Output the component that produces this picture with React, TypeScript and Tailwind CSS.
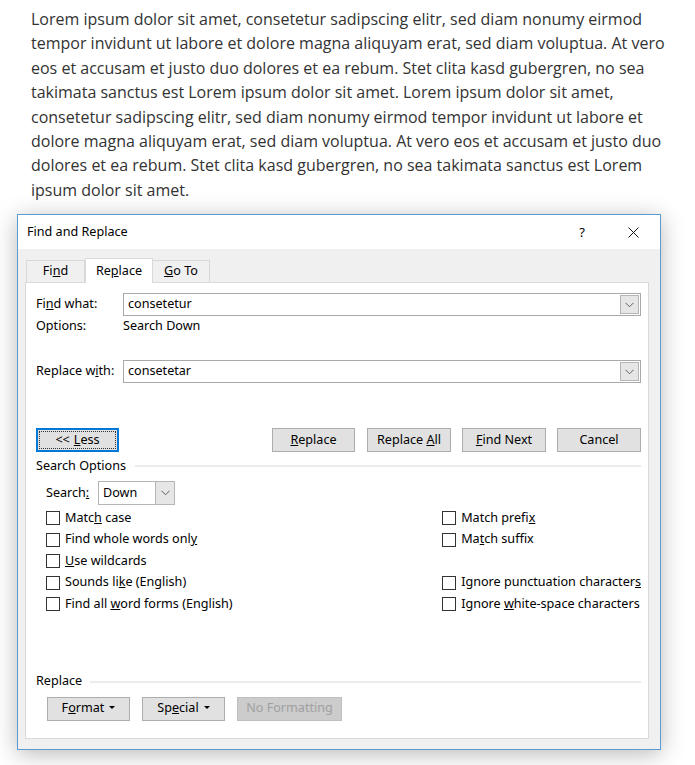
import React from 'react';

const dlgFont = { fontFamily: '"Noto Sans", "Open Sans", sans-serif' };

function Chevron() {
  return (
    <svg width="9" height="6" viewBox="0 0 9 6" className="text-[#606060]">
      <path d="M0.5 0.8 L4.5 4.8 L8.5 0.8" fill="none" stroke="currentColor" strokeWidth="1" />
    </svg>
  );
}

function Combo({ value }: { value: string }) {
  return (
    <div className="flex-1 h-[23px] border border-[#a9a9a9] bg-white flex items-center">
      <span className="flex-1 pl-[4px] text-black">{value}</span>
      <div className="w-[19px] h-[19px] mr-[1px] bg-[#e6e6e6] border border-[#b5b5b5] flex items-center justify-center">
        <Chevron />
      </div>
    </div>
  );
}

function Btn({ children, w = 'w-[84px]' }: { children: React.ReactNode; w?: string }) {
  return (
    <div className={`${w} h-[24px] bg-[#e1e1e1] border border-[#adadad] flex items-center justify-center text-black`}>
      {children}
    </div>
  );
}

function Check({ children }: { children: React.ReactNode }) {
  return (
    <div className="h-[21.5px] flex items-center gap-[5px] text-black whitespace-nowrap">
      <div className="w-[14px] h-[14px] border border-[#333] bg-white shrink-0" />
      <span>{children}</span>
    </div>
  );
}

function Caret() {
  return <span className="inline-block ml-[5px] mb-[2px] w-0 h-0 border-l-[3px] border-r-[3px] border-t-[3px] border-l-transparent border-r-transparent border-t-black align-middle" />;
}

export default function App() {
  return (
    <div className="w-[695px] h-[765px] bg-white overflow-hidden">
      <p
        className="pl-[31px] pr-[4px] pt-[7px] text-[16px] leading-[24.4px] text-[#333]"
        style={{ fontFamily: '"Open Sans", sans-serif' }}
      >
        Lorem ipsum dolor sit amet, consetetur sadipscing elitr, sed diam nonumy eirmod tempor invidunt ut labore et
        dolore magna aliquyam erat, sed diam voluptua. At vero eos et accusam et justo duo dolores et ea rebum. Stet
        clita kasd gubergren, no sea takimata sanctus est Lorem ipsum dolor sit amet. Lorem ipsum dolor sit amet,
        consetetur sadipscing elitr, sed diam nonumy eirmod tempor invidunt ut labore et dolore magna aliquyam erat, sed
        diam voluptua. At vero eos et accusam et justo duo dolores et ea rebum. Stet clita kasd gubergren, no sea
        takimata sanctus est Lorem ipsum dolor sit amet.
      </p>

      {/* Dialog */}
      <div
        className="ml-[17px] mt-[12px] w-[644px] border border-[#5b9bd5] bg-[#f0f0f0] shadow-[0_4px_22px_rgba(0,0,0,0.28)] text-[12.6px]"
        style={dlgFont}
      >
        {/* Title bar */}
        <div className="h-[34px] bg-white flex items-center pl-[9px] text-black">
          <span className="flex-1">Find and Replace</span>
          <span className="w-[20px] text-center mr-[36px] text-[13px]">?</span>
          <svg width="11" height="11" viewBox="0 0 11 11" className="mr-[21px]">
            <path d="M0.5 0.5 L10.5 10.5 M10.5 0.5 L0.5 10.5" stroke="#111" strokeWidth="1" />
          </svg>
        </div>

        <div className="pl-[7px] pr-[11px] pt-[8px] pb-[10px]">
          {/* Tabs */}
          <div className="flex items-end h-[25px] pl-[1px]">
            <div className="w-[59px] h-[22px] bg-[#f0f0f0] border border-b-0 border-[#d9d9d9] flex items-center justify-center text-black">
              Fi<u>n</u>d
            </div>
            <div className="w-[68px] h-[25px] bg-white border border-b-0 border-[#d9d9d9] flex items-center justify-center text-black relative top-[1px] z-10">
              Re<u>p</u>lace
            </div>
            <div className="w-[57px] h-[22px] bg-[#f0f0f0] border border-b-0 border-l-0 border-[#d9d9d9] flex items-center justify-center text-black">
              <u>G</u>o To
            </div>
          </div>

          {/* Panel */}
          <div className="h-[457px] bg-white border border-[#d9d9d9] flex flex-col pl-[10px] pr-[7px] pt-[10px] text-black">
            <div className="flex items-center h-[23px]">
              <span className="w-[87px]">Fi<u>n</u>d what:</span>
              <Combo value="consetetur" />
            </div>
            <div className="flex items-center h-[16px] mt-[2px]">
              <span className="w-[87px]">Options:</span>
              <span>Search Down</span>
            </div>
            <div className="flex items-center h-[23px] mt-[26px]">
              <span className="w-[87px]">Replace w<u>i</u>th:</span>
              <Combo value="consetetar" />
            </div>

            <div className="flex items-center h-[24px] mt-[45px]">
              <div className="w-[83px] h-[24px] bg-[#e1e1e1] border-2 border-[#0078d7] p-[1px]">
                <div className="w-full h-full border border-dotted border-[#333] flex items-center justify-center">
                  &lt;&lt; <u className="ml-[4px]">L</u>ess
                </div>
              </div>
              <div className="flex-1" />
              <Btn w="w-[83px]">
                <span><u>R</u>eplace</span>
              </Btn>
              <div className="w-[12px]" />
              <Btn>
                <span>Replace <u>A</u>ll</span>
              </Btn>
              <div className="w-[11px]" />
              <Btn>
                <span><u>F</u>ind Next</span>
              </Btn>
              <div className="w-[11px]" />
              <Btn>Cancel</Btn>
            </div>

            <div className="flex items-center h-[16px] mt-[6px]">
              <span>Search Options</span>
              <div className="flex-1 h-[2px] bg-[#ececec] ml-[9px]" />
            </div>

            <div className="flex items-center h-[24px] mt-[7px] pl-[10px]">
              <span className="w-[52px]">Search<u>:</u></span>
              <div className="w-[77px] h-[24px] border border-[#b5b5b5] bg-white flex items-center">
                <span className="flex-1 pl-[4px]">Down</span>
                <div className="w-[19px] h-[22px] bg-[#e6e6e6] border-l border-[#b5b5b5] flex items-center justify-center">
                  <Chevron />
                </div>
              </div>
            </div>

            <div className="flex mt-[2px] pl-[10px]">
              <div className="w-[397px] flex flex-col">
                <Check>Matc<u>h</u> case</Check>
                <Check>Find whole words onl<u>y</u></Check>
                <Check><u>U</u>se wildcards</Check>
                <Check>Sounds li<u>k</u>e (English)</Check>
                <Check>Find all <u>w</u>ord forms (English)</Check>
              </div>
              <div className="flex flex-col">
                <Check>Match prefi<u>x</u></Check>
                <Check>Ma<u>t</u>ch suffix</Check>
                <div className="h-[21.5px]" />
                <Check>Ignore punctuation character<u>s</u></Check>
                <Check>Ignore <u>w</u>hite-space characters</Check>
              </div>
            </div>

            <div className="flex items-center h-[16px] mt-[59px]">
              <span>Replace</span>
              <div className="flex-1 h-[2px] bg-[#ececec] ml-[8px]" />
            </div>

            <div className="flex items-center h-[24px] mt-[7px] pl-[11px] gap-[12px]">
              <Btn w="w-[83px]">
                <span>F<u>o</u>rmat<Caret /></span>
              </Btn>
              <Btn w="w-[83px]">
                <span>Sp<u>e</u>cial<Caret /></span>
              </Btn>
              <div className="w-[105px] h-[24px] bg-[#cccccc] border border-[#bfbfbf] flex items-center justify-center text-[#a0a0a0]">
                No Formatting
              </div>
            </div>
          </div>
        </div>
      </div>
    </div>
  );
}
